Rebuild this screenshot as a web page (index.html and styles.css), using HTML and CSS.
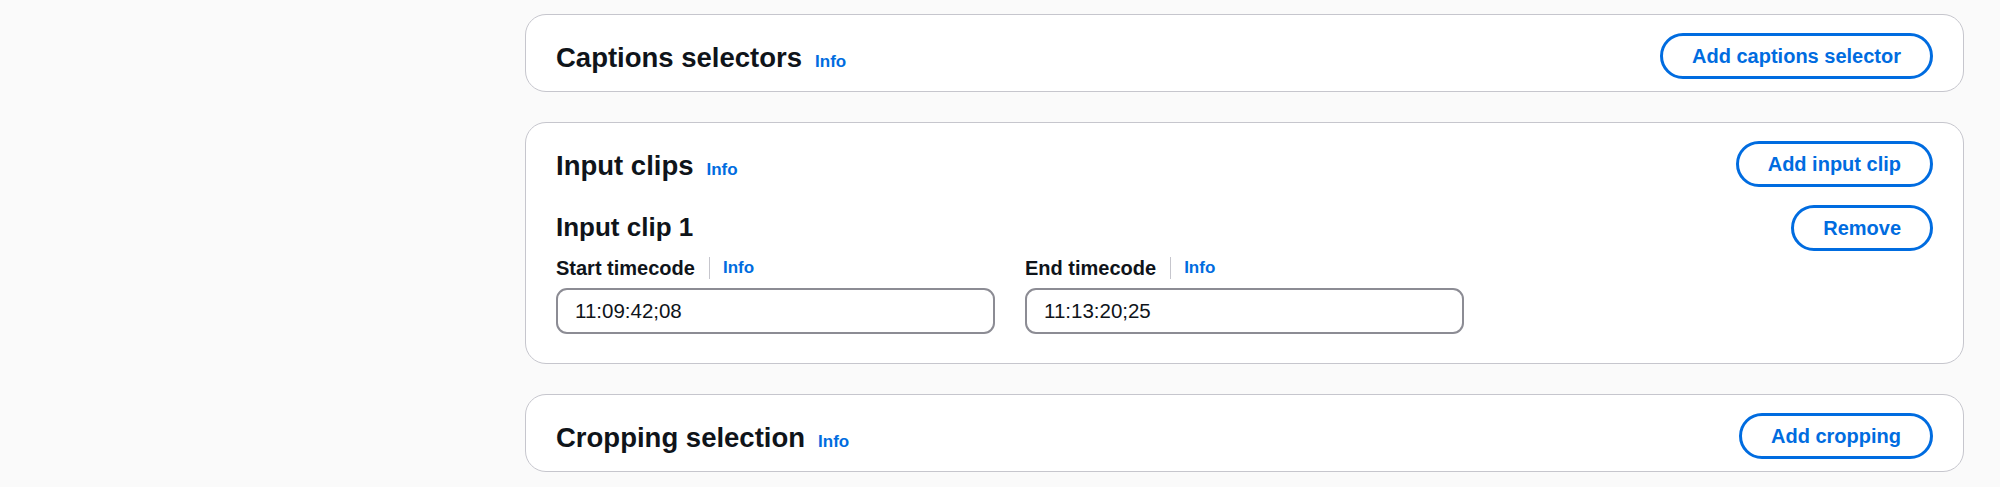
FILE: index.html
```html
<!DOCTYPE html>
<html lang="en">
<head>
  <meta charset="UTF-8">
  <title>Create job - Inputs</title>
  <link rel="stylesheet" href="styles.css">
</head>
<body>
  <div class="content">

    <div class="card">
      <div class="card-header">
        <h2>Captions selectors <a class="info" href="#">Info</a></h2>
        <button class="btn">Add captions selector</button>
      </div>
    </div>

    <div class="card">
      <div class="card-header">
        <h2>Input clips <a class="info" href="#">Info</a></h2>
        <button class="btn">Add input clip</button>
      </div>

      <div class="clip">
        <div class="clip-header">
          <h3>Input clip 1</h3>
          <button class="btn">Remove</button>
        </div>
        <div class="columns">
          <div class="field">
            <div class="label-row">
              <label for="start">Start timecode</label>
              <span class="divider"></span>
              <a class="info" href="#">Info</a>
            </div>
            <input type="text" id="start" value="11:09:42;08">
          </div>
          <div class="field">
            <div class="label-row">
              <label for="end">End timecode</label>
              <span class="divider"></span>
              <a class="info" href="#">Info</a>
            </div>
            <input type="text" id="end" value="11:13:20;25">
          </div>
        </div>
      </div>
    </div>

    <div class="card">
      <div class="card-header">
        <h2>Cropping selection <a class="info" href="#">Info</a></h2>
        <button class="btn">Add cropping</button>
      </div>
    </div>

  </div>
</body>
</html>
```

FILE: styles.css
```css
body {
  font-family: 'Liberation Sans', Arial, sans-serif;
  background: #fafafa;
  color: #0f141a;
  margin: 0;
}

.content {
  width: 1439px;
  margin-left: 525px;
  padding-top: 14px;
  display: flex;
  flex-direction: column;
  gap: 30px;
}

.card {
  background: #fff;
  border: 1px solid #c6c6cd;
  border-radius: 21px;
  padding: 18px 30px 12px 30px;
}

.card-header,
.clip-header {
  display: flex;
  justify-content: space-between;
  align-items: center;
}

h2 {
  margin: 0;
  padding-top: 3px;
  font-size: 27.5px;
  font-weight: bold;
  line-height: 1.2;
  display: flex;
  align-items: baseline;
  gap: 13px;
}

h3 {
  margin: 0;
  font-size: 26px;
  font-weight: bold;
  line-height: 1.2;
}

.info {
  color: #006ce0;
  font-size: 17px;
  font-weight: bold;
  text-decoration: none;
}

.btn {
  font-family: inherit;
  height: 46px;
  padding: 0 29px;
  background: #fff;
  color: #006ce0;
  border: 3px solid #006ce0;
  border-radius: 23px;
  font-size: 20px;
  font-weight: bold;
  cursor: pointer;
}

.btn:hover {
  background: #f0fbff;
}

.clip {
  padding-top: 18px;
  padding-bottom: 17px;
}

.columns {
  display: grid;
  grid-template-columns: repeat(3, 1fr);
  column-gap: 30px;
  margin-top: 5px;
}

.label-row {
  display: flex;
  align-items: center;
  height: 24px;
  margin-bottom: 8px;
}

label {
  font-size: 20px;
  font-weight: bold;
}

.divider {
  width: 1px;
  height: 22px;
  background: #c6c6cd;
  margin: 0 13px 0 14px;
}

input {
  box-sizing: border-box;
  width: 100%;
  height: 46px;
  padding: 0 17px;
  border: 2px solid #8c8c94;
  border-radius: 11px;
  font-family: inherit;
  font-size: 20.5px;
  color: #0f141a;
  background: #fff;
}
```
